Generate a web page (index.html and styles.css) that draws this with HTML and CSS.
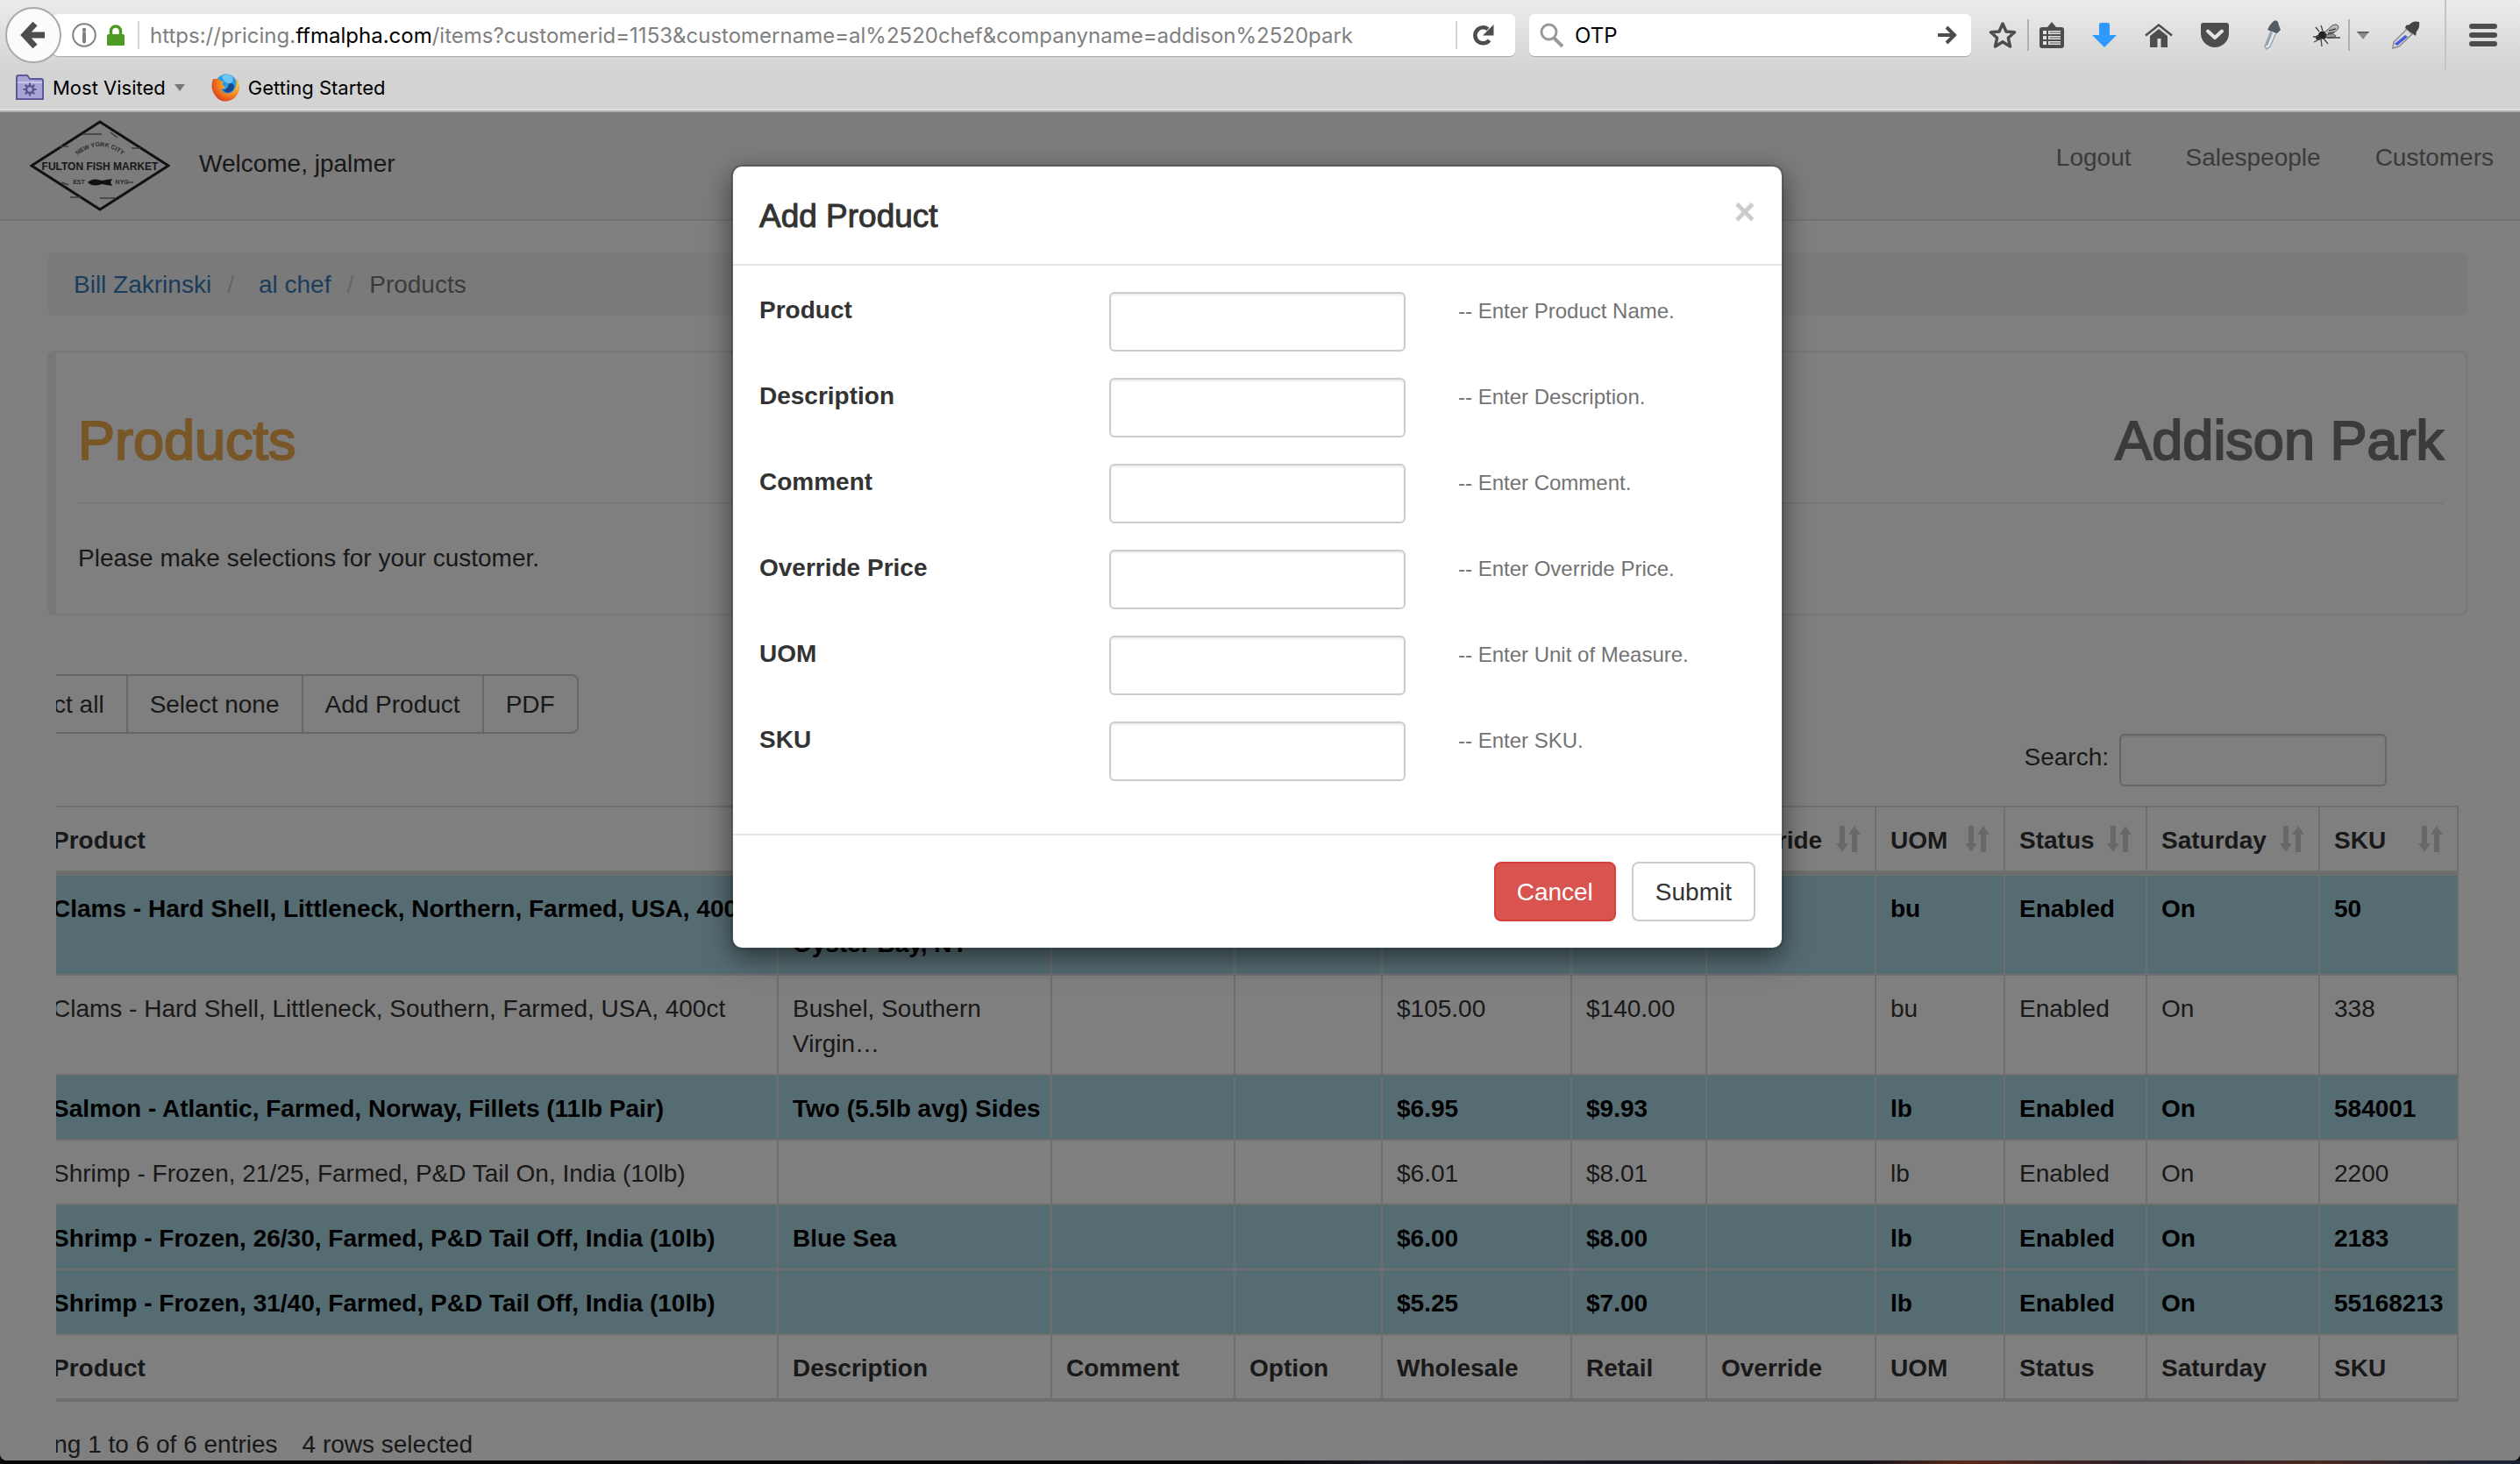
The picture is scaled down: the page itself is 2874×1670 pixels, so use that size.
FILE: index.html
```html
<!DOCTYPE html>
<html lang="en">
<head>
<meta charset="utf-8">
<title>Products</title>
<link rel="stylesheet" href="styles.css">
</head>
<body>
<svg class="defs" aria-hidden="true">
  <symbol id="sort" viewBox="0 0 28 30">
    <path d="M4 0h6v20h4L7 30 0 20h4zM18 30h6V10h4L21 0l-7 10h4z"/>
  </symbol>
</svg>

<header class="chrome">
  <div class="toolbar">
    <button class="back" aria-label="Back">
      <svg width="30" height="32" viewBox="0 0 30 32"><path d="M17 3 5 16l12 13M6 16h22" fill="none" stroke="#4d4d4d" stroke-width="7"/></svg>
    </button>
    <div class="urlbar">
      <svg width="28" height="28" viewBox="0 0 28 28"><circle cx="14" cy="14" r="12.8" fill="none" stroke="#808080" stroke-width="2"/><circle cx="14" cy="8" r="2.2" fill="#808080"/><path d="M14 12v9.500" stroke="#808080" stroke-width="4" stroke-linecap="round"/></svg>
      <svg width="20" height="24" viewBox="0 0 20 24"><path d="M4.500 12V7.500a5.500 5.500 0 0 1 11 0V12" fill="none" stroke="#4d9a26" stroke-width="3.500"/><rect y="11" width="20" height="13" rx="1.500" fill="#4d9a26"/></svg>
      <span class="divider"></span>
      <span class="url">https://pricing.<b>ffmalpha.com</b>/items?customerid=1153&amp;customername=al%2520chef&amp;companyname=addison%2520park</span>
      <span class="divider"></span>
      <button class="reload" aria-label="Reload">
        <svg width="24" height="24" viewBox="0 0 24 24"><path d="M18.500 17.800A9 9 0 1 1 17 5.300" fill="none" stroke="#4d4d4d" stroke-width="4.500"/><path d="M23.500 0v12.500H11z" fill="#4d4d4d"/></svg>
      </button>
    </div>
    <div class="searchbar">
      <svg width="28" height="28" viewBox="0 0 28 28"><circle cx="10.500" cy="10.500" r="8.500" fill="none" stroke="#999" stroke-width="3"/><path d="m16 17 10 10" stroke="#999" stroke-width="4"/></svg>
      <input type="text" value="OTP" aria-label="Search the web">
      <button aria-label="Go"><svg width="22" height="22" viewBox="0 0 22 22"><path d="M0 11h17M10 2l9 9-9 9" fill="none" stroke="#4d4d4d" stroke-width="4"/></svg></button>
    </div>
    <nav class="tools" aria-label="Browser tools">
      <button aria-label="Bookmark this page"><svg width="32" height="32" viewBox="0 0 32 32"><path d="m16 3 4 9 9.500.8-7.200 6.400 2.200 9.800-8.500-5.200L7.500 29l2.200-9.800L2.500 12.800 12 12z" fill="none" stroke="#4d4d4d" stroke-width="3.500" stroke-linejoin="round"/></svg></button>
      <span class="bar"></span>
      <button aria-label="Bookmarks list"><svg width="28" height="30" viewBox="0 0 28 30"><path d="M3 6h6l5-6 5 6h6a3 3 0 0 1 3 3v18a3 3 0 0 1-3 3H3a3 3 0 0 1-3-3V9a3 3 0 0 1 3-3z" fill="#4d4d4d"/><path d="M10 10h14v4H10zM10 16h14v4H10zM10 22h14v4H10zM4 10h4v4H4zM4 16h4v4H4zM4 22h4v4H4z" fill="#e2e2e2"/><path d="M11.500 12H24M11.500 18H24M11.500 24H24" stroke="#4d4d4d" stroke-width="1"/></svg></button>
      <button aria-label="Downloads"><svg width="28" height="28" viewBox="0 0 28 28"><path d="M8 2q0-2 2-2h8q2 0 2 2v12h8L14 28 0 14h8z" fill="#2f99ff"/></svg></button>
      <button aria-label="Home"><svg width="32" height="28" viewBox="0 0 32 28"><path d="m1 14.500 15-12 15 12" fill="none" stroke="#4d4d4d" stroke-width="2.500"/><path d="M6 15 16 7l10 8v13h-7.500V18h-4v10H6z" fill="#4d4d4d"/></svg></button>
      <button aria-label="Save to Pocket"><svg width="32" height="28" viewBox="0 0 32 28"><path d="M3 0h26a3 3 0 0 1 3 3v9a16 16 0 0 1-32 0V3a3 3 0 0 1 3-3z" fill="#4d4d4d"/><path d="m8 9.500 8 7.500 8-7.500" fill="none" stroke="#e4e4e4" stroke-width="4" stroke-linecap="round" stroke-linejoin="round"/></svg></button>
      <button aria-label="Eyedropper"><svg width="32" height="34" viewBox="0 0 32 34"><path d="m16 12 6 2-7 16-4 3-2-3z" fill="#e8ecee" stroke="#93a5b4" stroke-width="1.500"/><path d="m17 14-6 15" stroke="#999" stroke-width="2"/><path d="M17 3q4-5 7-1l1 4 2 5-4 4-11-4 2-4z" fill="#555b60"/></svg></button>
      <button class="bee" aria-label="Inspect page"><svg width="32" height="28" viewBox="0 0 32 28"><ellipse cx="11" cy="14" rx="5" ry="4.500" fill="#222"/><circle cx="6" cy="17" r="3" fill="#333"/><path d="M13 11 22 3q6-3 7 2 0 5-13 9z" fill="#b9b9b9" stroke="#555"/><path d="M15 14q8-3 11 1-3 3-11 2z" fill="#999" stroke="#555"/><path d="M4 16H0M5 20l-4 2M9 18l1 9M12 18l5 6M16 17l15 0M7 10 3 5M11 9 9 3M18 9l8-2M17 12l7-1" stroke="#444" stroke-width="1.300"/></svg></button>
      <span class="bar"></span>
      <button class="drop" aria-label="More"><svg width="14" height="9" viewBox="0 0 14 9"><path d="M0 0h14L7 9z" fill="#8a8a8a"/><path d="M0 0h14l-1 1.500H1z" fill="#555"/></svg></button>
      <button aria-label="Color picker"><svg width="32" height="32" viewBox="0 0 32 32"><path d="M17 9l6 6L8 29l-7 2 1-7z" fill="#d9d9d9" stroke="#8c8c8c" stroke-width="1.500"/><path d="m15 16 3 2L6 28l-3-2z" fill="#3c5fd8"/><path d="M20 4q4-5 11-3 1 7-3 11l-1 5-12-9 1-3z" fill="#444"/></svg></button>
    </nav>
    <button class="menu" aria-label="Menu"><svg width="32" height="26" viewBox="0 0 32 26"><path d="M3 3h26M3 13h26M3 23h26" stroke="#4d4d4d" stroke-width="6" stroke-linecap="round"/></svg></button>
  </div>
  <div class="bookmarks">
    <button class="mark">
      <svg width="32" height="30" viewBox="0 0 32 30"><path d="M1 28V3q0-2 2-2h10l3 4h13q2 0 2 2v21z" fill="#a9a4d6" stroke="#5f5896" stroke-width="2"/><path d="M2 9h28" stroke="#c9c5ea" stroke-width="2"/><circle cx="16" cy="17" r="4" fill="none" stroke="#5a5490" stroke-width="2.500"/><path d="M16 9.500v3M16 21.500v3M8.500 17h3M20.500 17h3M10.700 11.700l2 2M19.300 20.300l2 2M21.300 11.700l-2 2M12.700 20.300l-2 2" stroke="#5a5490" stroke-width="2"/></svg>
      Most Visited
      <svg width="12" height="8" viewBox="0 0 12 8"><path d="M0 0h12L6 8z" fill="#777"/></svg>
    </button>
    <button class="mark">
      <svg width="32" height="32" viewBox="0 0 32 32"><defs><radialGradient id="fx" cx=".75" cy=".25" r=".9"><stop offset="0" stop-color="#ffe04a"/><stop offset=".5" stop-color="#f58a1f"/><stop offset="1" stop-color="#d5341c"/></radialGradient></defs><circle cx="17" cy="13" r="12.500" fill="#2b9be0"/><path d="M12 3q6-4 12 0 2 8-4 8-6-1-8-8z" fill="#6cc8f2"/><path d="M20 12q5-3 6 3-1 6-8 7l-6-4q6 2 8-6z" fill="#15468f"/><path d="M2 6q-3 8 0 15 5 11 15 10.500Q30 30 32 16q0-7-4-11 2 9-2 14-4 5-10 3-4-1-5-5 3 1 5-1l-3-3q-1-2 1-4-4 0-6-3-3 0-6 0z" fill="url(#fx)"/></svg>
      Getting Started
    </button>
  </div>
</header>

<div class="page">
  <nav class="navbar">
    <a class="brand" href="#" aria-label="Fulton Fish Market">
      <svg width="160" height="104" viewBox="0 0 160 104">
        <defs><path id="arc" d="M52 42q28-24 56 0"/></defs>
        <path d="M80 2 158 52 80 102 2 52z" fill="none" stroke="#222" stroke-width="3"/>
        <path d="M60 16h22M92 14l8 6M34 30h10M116 32h10M58 88h-12M80 89h18M36 71l8 3M118 71h-8" stroke="#777" stroke-width="1.500"/>
        <g class="logo-text">
          <text class="small"><textPath href="#arc" startOffset="50%">NEW YORK CITY</textPath></text>
          <text class="name" x="80" y="57">FULTON FISH MARKET</text>
          <text class="small" x="56" y="73">EST</text>
          <text class="small" x="105" y="73">NYC</text>
        </g>
        <path d="M66 71q6-6 16-2l12-2-2 4 2 4-12-2q-10 4-16-2z" fill="#222"/>
      </svg>
    </a>
    <span class="welcome">Welcome, jpalmer</span>
    <div class="links"><a href="#">Logout</a><a href="#">Salespeople</a><a href="#">Customers</a></div>
  </nav>

  <main class="container">
    <ol class="breadcrumb">
      <li><a href="#">Bill Zakrinski</a></li>
      <li><a href="#">al chef</a></li>
      <li>Products</li>
    </ol>

    <section class="callout">
      <div class="titles"><h1 class="warn">Products</h1><h1>Addison Park</h1></div>
      <p>Please make selections for your customer.</p>
    </section>

    <section class="grid">
      <div class="btn-group">
        <button>Select all</button><button>Select none</button><button>Add Product</button><button>PDF</button>
      </div>
      <div class="filter"><label for="q">Search:</label><input id="q" type="search"></div>
      <table>
        <colgroup><col><col class="w-desc"><col class="w-comment"><col class="w-option"><col class="w-whole"><col class="w-retail"><col class="w-over"><col class="w-uom"><col class="w-status"><col class="w-sat"><col class="w-sku"></colgroup>
        <thead>
          <tr>
            <th><div>Product<svg><use href="#sort"/></svg></div></th>
            <th><div>Description<svg><use href="#sort"/></svg></div></th>
            <th><div>Comment<svg><use href="#sort"/></svg></div></th>
            <th><div>Option<svg><use href="#sort"/></svg></div></th>
            <th><div>Wholesale<svg><use href="#sort"/></svg></div></th>
            <th><div>Retail<svg><use href="#sort"/></svg></div></th>
            <th><div>Override<svg><use href="#sort"/></svg></div></th>
            <th><div>UOM<svg><use href="#sort"/></svg></div></th>
            <th><div>Status<svg><use href="#sort"/></svg></div></th>
            <th><div>Saturday<svg><use href="#sort"/></svg></div></th>
            <th><div>SKU<svg><use href="#sort"/></svg></div></th>
          </tr>
        </thead>
        <tbody>
          <tr class="selected"><td>Clams - Hard Shell, Littleneck, Northern, Farmed, USA, 400ct</td><td>Bushel,<br>Oyster Bay, NY</td><td></td><td></td><td></td><td></td><td></td><td>bu</td><td>Enabled</td><td>On</td><td>50</td></tr>
          <tr><td>Clams - Hard Shell, Littleneck, Southern, Farmed, USA, 400ct</td><td>Bushel, Southern<br>Virgin…</td><td></td><td></td><td>$105.00</td><td>$140.00</td><td></td><td>bu</td><td>Enabled</td><td>On</td><td>338</td></tr>
          <tr class="selected"><td>Salmon - Atlantic, Farmed, Norway, Fillets (11lb Pair)</td><td>Two (5.5lb avg) Sides</td><td></td><td></td><td>$6.95</td><td>$9.93</td><td></td><td>lb</td><td>Enabled</td><td>On</td><td>584001</td></tr>
          <tr><td>Shrimp - Frozen, 21/25, Farmed, P&amp;D Tail On, India (10lb)</td><td></td><td></td><td></td><td>$6.01</td><td>$8.01</td><td></td><td>lb</td><td>Enabled</td><td>On</td><td>2200</td></tr>
          <tr class="selected"><td>Shrimp - Frozen, 26/30, Farmed, P&amp;D Tail Off, India (10lb)</td><td>Blue Sea</td><td></td><td></td><td>$6.00</td><td>$8.00</td><td></td><td>lb</td><td>Enabled</td><td>On</td><td>2183</td></tr>
          <tr class="selected"><td>Shrimp - Frozen, 31/40, Farmed, P&amp;D Tail Off, India (10lb)</td><td></td><td></td><td></td><td>$5.25</td><td>$7.00</td><td></td><td>lb</td><td>Enabled</td><td>On</td><td>55168213</td></tr>
        </tbody>
        <tfoot>
          <tr><th>Product</th><th>Description</th><th>Comment</th><th>Option</th><th>Wholesale</th><th>Retail</th><th>Override</th><th>UOM</th><th>Status</th><th>Saturday</th><th>SKU</th></tr>
        </tfoot>
      </table>
      <div class="info"><span>Showing 1 to 6 of 6 entries</span><span>4 rows selected</span></div>
    </section>
  </main>

  <div class="backdrop">
    <form class="modal" role="dialog" aria-labelledby="modal-title">
      <header class="modal-header">
        <h4 id="modal-title">Add Product</h4>
        <button type="button" class="close" aria-label="Close">×</button>
      </header>
      <div class="modal-body">
        <div class="field"><label for="f1">Product</label><input id="f1" type="text"><small>-- Enter Product Name.</small></div>
        <div class="field"><label for="f2">Description</label><input id="f2" type="text"><small>-- Enter Description.</small></div>
        <div class="field"><label for="f3">Comment</label><input id="f3" type="text"><small>-- Enter Comment.</small></div>
        <div class="field"><label for="f4">Override Price</label><input id="f4" type="text"><small>-- Enter Override Price.</small></div>
        <div class="field"><label for="f5">UOM</label><input id="f5" type="text"><small>-- Enter Unit of Measure.</small></div>
        <div class="field"><label for="f6">SKU</label><input id="f6" type="text"><small>-- Enter SKU.</small></div>
      </div>
      <footer class="modal-footer">
        <button type="button" class="danger">Cancel</button>
        <button type="submit">Submit</button>
      </footer>
    </form>
  </div>
</div>
<div class="desktop"></div>
</body>
</html>
```
FILE: styles.css
```css
* { box-sizing: border-box; }
html { background: #0b0b0e; }
body {
  margin: 0;
  height: 100vh;
  display: flex;
  flex-direction: column;
  overflow: hidden;
  font: 28px/40px "Liberation Sans", Arial, sans-serif;
  color: #333;
}
button, input { font: inherit; color: inherit; margin: 0; }
a { color: #337ab7; text-decoration: none; }
svg { display: block; flex: none; }
.defs { position: absolute; width: 0; height: 0; }

/* Browser window */
.chrome {
  flex: none;
  height: 128px;
  background: linear-gradient(#ebebeb, #d3d3d3 82px);
  border-bottom: 2px solid #b0b0b0;
  box-shadow: inset 0 -2px #ddd;
  font: 24px/32px Inter, sans-serif;
  color: #000;
}
.chrome button { border: 0; padding: 0; background: none; display: flex; align-items: center; }
.toolbar { display: flex; align-items: center; height: 80px; padding-left: 6px; }
.chrome .back {
  flex: none;
  justify-content: center;
  width: 64px;
  height: 64px;
  border: 2px solid #aaa;
  border-radius: 50%;
  background: #fbfbfb;
  position: relative;
  z-index: 1;
}
.urlbar, .searchbar {
  display: flex;
  align-items: center;
  height: 48px;
  background: #fff;
  border-radius: 6px;
  box-shadow: 0 1px #aaa;
}
.urlbar { flex: 1; margin-left: -10px; padding: 0 24px 0 22px; gap: 12px; min-width: 0; }
.divider { width: 2px; height: 32px; background: #d4d4d4; margin-left: 3px; flex: none; }
.url { flex: 1; padding-top: 2px; color: #808080; white-space: nowrap; overflow: hidden; }
.url b { font-weight: 400; color: #000; }
.reload { margin-left: 6px; }
.searchbar { flex: none; width: 504px; margin-left: 16px; padding: 0 16px 0 12px; gap: 12px; }
.searchbar input { flex: 1; min-width: 0; border: 0; padding: 2px 0 0; background: none; }
.tools { display: flex; align-items: center; gap: 32px; margin-left: 20px; }
.bar { width: 2px; height: 36px; background: #b0b0b0; margin: 0 -20px; }
.bee { margin-right: -4px; }
.drop { margin: 0 -6px 0 -4px; }
.menu { align-self: stretch; margin-left: 28px; }
.chrome .menu { border-left: 2px solid #c4c4c4; padding: 0 26px; }
.bookmarks { display: flex; align-items: center; height: 40px; padding: 0 18px; gap: 30px; font-size: 22px; }
.mark { gap: 10px; }

/* Page */
.page { flex: 1; min-height: 0; position: relative; overflow: hidden; background: #fff; border-radius: 0 0 8px 8px; }
.navbar {
  display: flex;
  align-items: flex-start;
  height: 124px;
  padding: 9px 30px 0 34px;
  background: #f8f8f8;
  border-bottom: 2px solid #e7e7e7;
}
.logo-text { fill: #333; font-family: "Liberation Sans Narrow", "Liberation Sans", sans-serif; font-weight: 700; text-anchor: middle; }
.logo-text .name { font-size: 12px; }
.logo-text .small { font-size: 7px; fill: #555; }
.welcome { margin: 30px 0 0 33px; }
.links { display: flex; gap: 62px; margin: 23px 0 0 auto; }
.links a { color: #777; }
.container { padding: 36px 60px 0 54px; }
.breadcrumb {
  display: flex;
  margin: 0;
  padding: 17px 30px 15px;
  list-style: none;
  background: #f5f5f5;
  border-radius: 8px;
  color: #777;
}
.breadcrumb li + li::before { content: "/"; color: #ccc; padding: 0 18px; }
.breadcrumb li:nth-child(2)::before { padding-right: 28px; }
.callout {
  margin-top: 40px;
  padding: 66px 25px 43px;
  border: 2px solid #eee;
  border-left-width: 10px;
  border-radius: 8px;
}
.titles { display: flex; justify-content: space-between; padding-bottom: 37px; border-bottom: 2px solid #eee; }
h1 { margin: 0; font-size: 63px; line-height: 68px; font-weight: 400; color: #777; -webkit-text-stroke: 2px; }
.warn { color: #f0ad4e; }
.callout p { margin: 42px 0 0; }

.grid { margin: 67px 10px 0; overflow: hidden; }
.btn-group { display: flex; margin-left: -86px; }
.btn-group button {
  height: 68px;
  padding: 2px 25px 0;
  border: 2px solid #ccc;
  background: #fff;
  white-space: nowrap;
}
.btn-group button + button { margin-left: -2px; }
.btn-group button:last-child { border-radius: 0 8px 8px 0; }
.filter { display: flex; justify-content: flex-end; gap: 12px; padding-right: 82px; }
.filter label { padding-top: 7px; }
.filter input { width: 305px; height: 60px; }
.filter input, .field input {
  border: 2px solid #ccc;
  border-radius: 6px;
  padding: 0 20px;
  background: #fff;
  box-shadow: inset 0 2px 2px rgba(0, 0, 0, .075);
  appearance: none;
}
table {
  table-layout: fixed;
  width: calc(100% + 20px);
  margin: 22px 0 0 -20px;
  border-collapse: separate;
  border-spacing: 0;
  border-top: 2px solid #ddd;
}
.w-desc { width: 312px; }
.w-comment { width: 209px; }
.w-option { width: 168px; }
.w-whole { width: 216px; }
.w-retail { width: 154px; }
.w-over { width: 193px; }
.w-uom { width: 147px; }
.w-status { width: 162px; }
.w-sat { width: 197px; }
.w-sku { width: 158px; }
th, td {
  padding: 18px 16px 14px;
  text-align: left;
  vertical-align: top;
  white-space: nowrap;
  border-right: 2px solid #ddd;
  border-bottom: 2px solid #ddd;
}
thead th { border-bottom-width: 6px; }
tfoot th { border-bottom-width: 4px; }
th div { display: flex; justify-content: space-between; }
th svg { width: 28px; height: 30px; margin-top: 3px; fill: #d0d0d0; }
.selected { background: #add8e6; color: #000; font-weight: 700; }
.info { display: flex; gap: 28px; margin: 29px 0 0 -79px; white-space: nowrap; }

/* Dialog */
.backdrop {
  position: absolute;
  inset: 0;
  padding: 60px 6px 0 0;
  background: rgba(0, 0, 0, .5);
}
.modal {
  width: 1200px;
  margin: 0 auto;
  background: #fff;
  background-clip: padding-box;
  border: 2px solid rgba(0, 0, 0, .2);
  border-radius: 12px;
  box-shadow: 0 10px 30px rgba(0, 0, 0, .5);
}
.modal-header {
  display: flex;
  justify-content: space-between;
  padding: 31px 30px 28px;
  border-bottom: 2px solid #e5e5e5;
}
h4 { margin: 0; font-size: 37px; line-height: 52px; font-weight: 400; -webkit-text-stroke: 1px; }
.close {
  align-self: flex-start;
  padding: 0;
  border: 0;
  background: none;
  font-size: 42px;
  line-height: 42px;
  font-weight: 700;
  color: #ccc;
}
.modal-body { display: grid; gap: 30px; padding: 30px 30px 60px; }
.field { display: grid; grid-template-columns: 399px 338px 1fr; align-items: start; }
.field label { font-weight: 700; padding-top: 1px; }
.field input { height: 68px; min-width: 0; }
.field small { padding: 2px 0 0 60px; font-size: 24px; color: #737373; }
.modal-footer {
  display: flex;
  justify-content: flex-end;
  gap: 18px;
  padding: 30px;
  border-top: 2px solid #e5e5e5;
}
.modal-footer button {
  height: 68px;
  padding: 1px 25px 0;
  border: 2px solid #ccc;
  border-radius: 8px;
  background: #fff;
}
.modal-footer .danger { padding: 1px 24px 0; background: #d9534f; border-color: #d43f3a; color: #fff; }

.desktop {
  flex: none;
  height: 4px;
  background: linear-gradient(90deg, #050606 0 50%, #1b1a26 55%, #15131c 74%, #5a2a1c 78%, #2a2029 85%, #4a2a22 92%, #1b2233 98%);
}
```
